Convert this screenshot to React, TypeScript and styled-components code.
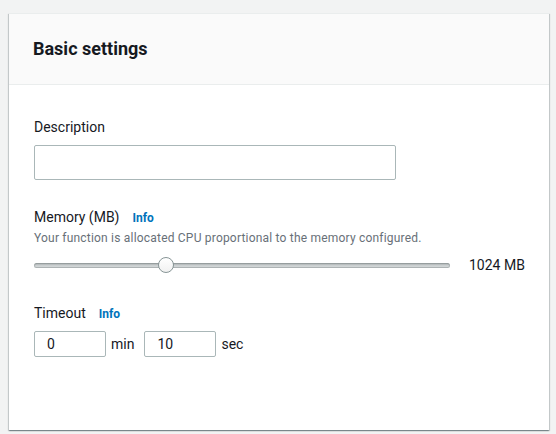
import React from "react";
import styled, { createGlobalStyle } from "styled-components";

const GlobalStyle = createGlobalStyle`
  html, body { margin: 0; padding: 0; }
  body {
    background: #f2f3f3;
    font-family: Roboto, "Liberation Sans", Arial, sans-serif;
    color: #16191f;
  }
  * { box-sizing: border-box; }
`;

const Page = styled.div`
  width: 556px;
  height: 434px;
  padding: 13px 7px 0 9px;
`;

const Card = styled.section`
  background: #ffffff;
  border-top: 1px solid #eaeded;
  box-shadow: 0 1px 1px 0 rgba(0, 28, 36, 0.3), 1px 1px 1px 0 rgba(0, 28, 36, 0.15),
    -1px 1px 1px 0 rgba(0, 28, 36, 0.15);
`;

const CardHeader = styled.header`
  height: 71px;
  background: #fafafa;
  border-bottom: 1px solid #eaeded;
  padding: 0 24px;
  display: flex;
  align-items: center;
`;

const Title = styled.h2`
  margin: 0;
  font-size: 18px;
  line-height: 22px;
  font-weight: 700;
  color: #16191f;
`;

const CardBody = styled.div`
  padding: 31px 25px 73px 25px;
  display: flex;
  flex-direction: column;
`;

const Field = styled.div<{ $first?: boolean }>`
  margin-top: ${(p) => (p.$first ? "0" : "26px")};
  display: flex;
  flex-direction: column;
`;

const LabelRow = styled.div`
  display: flex;
  align-items: baseline;
  gap: 13px;
  height: 22px;
`;

const Label = styled.label`
  font-size: 14px;
  line-height: 22px;
  color: #16191f;
`;

const InfoLink = styled.a`
  font-size: 12px;
  font-weight: 700;
  color: #0073bb;
  text-decoration: none;
  cursor: pointer;
`;

const Hint = styled.div`
  margin-top: 2px;
  font-size: 12px;
  line-height: 16px;
  letter-spacing: 0.2px;
  color: #687078;
  white-space: nowrap;
`;

const TextInput = styled.input<{ $width: number; $height: number }>`
  width: ${(p) => p.$width}px;
  height: ${(p) => p.$height}px;
  flex-shrink: 0;
  border: 1px solid #aab7b8;
  border-radius: 2px;
  padding: 0 12px;
  font-family: inherit;
  font-size: 14px;
  color: #16191f;
  background: #fff;
  outline: none;
`;

const Control = styled.div`
  margin-top: 7px;
  display: flex;
  align-items: center;
`;

const SliderRow = styled.div`
  margin-top: 8px;
  height: 22px;
  display: flex;
  align-items: center;
`;

const SliderTrack = styled.div`
  position: relative;
  flex: 0 0 416px;
  height: 5px;
  border-radius: 3px;
  background: linear-gradient(#9ea5a6, #d3d7d8 60%, #c6cbcc);
  box-shadow: inset 0 0 0 1px rgba(120, 128, 130, 0.35);
`;

const SliderThumb = styled.div`
  position: absolute;
  top: 50%;
  width: 16px;
  height: 16px;
  margin-top: -8px;
  border-radius: 50%;
  background: linear-gradient(#ffffff, #f1f1f1);
  border: 1px solid #879596;
`;

const SliderValue = styled.span`
  margin-left: 19px;
  font-size: 14px;
  line-height: 22px;
  color: #16191f;
  white-space: nowrap;
`;

const Unit = styled.span<{ $last?: boolean }>`
  margin-left: 5px;
  margin-right: ${(p) => (p.$last ? "0" : "10px")};
  font-size: 14px;
  color: #16191f;
`;

const MIN = 128;
const MAX = 3008;
const MEMORY = 1024;

export default function App() {
  const frac = (MEMORY - MIN) / (MAX - MIN);
  const left = frac * (416 - 16);
  return (
    <>
      <GlobalStyle />
      <Page>
        <Card>
          <CardHeader>
            <Title>Basic settings</Title>
          </CardHeader>
          <CardBody>
            <Field $first>
              <LabelRow>
                <Label>Description</Label>
              </LabelRow>
              <Control>
                <TextInput $width={362} $height={35} defaultValue="" />
              </Control>
            </Field>
            <Field>
              <LabelRow>
                <Label>Memory (MB)</Label>
                <InfoLink>Info</InfoLink>
              </LabelRow>
              <Hint>Your function is allocated CPU proportional to the memory configured.</Hint>
              <SliderRow>
                <SliderTrack>
                  <SliderThumb style={{ left: `${left}px` }} />
                </SliderTrack>
                <SliderValue>{MEMORY} MB</SliderValue>
              </SliderRow>
            </Field>
            <Field>
              <LabelRow>
                <Label>Timeout</Label>
                <InfoLink>Info</InfoLink>
              </LabelRow>
              <Control>
                <TextInput $width={72} $height={26} defaultValue="0" />
                <Unit>min</Unit>
                <TextInput $width={72} $height={26} defaultValue="10" />
                <Unit $last>sec</Unit>
              </Control>
            </Field>
          </CardBody>
        </Card>
      </Page>
    </>
  );
}
